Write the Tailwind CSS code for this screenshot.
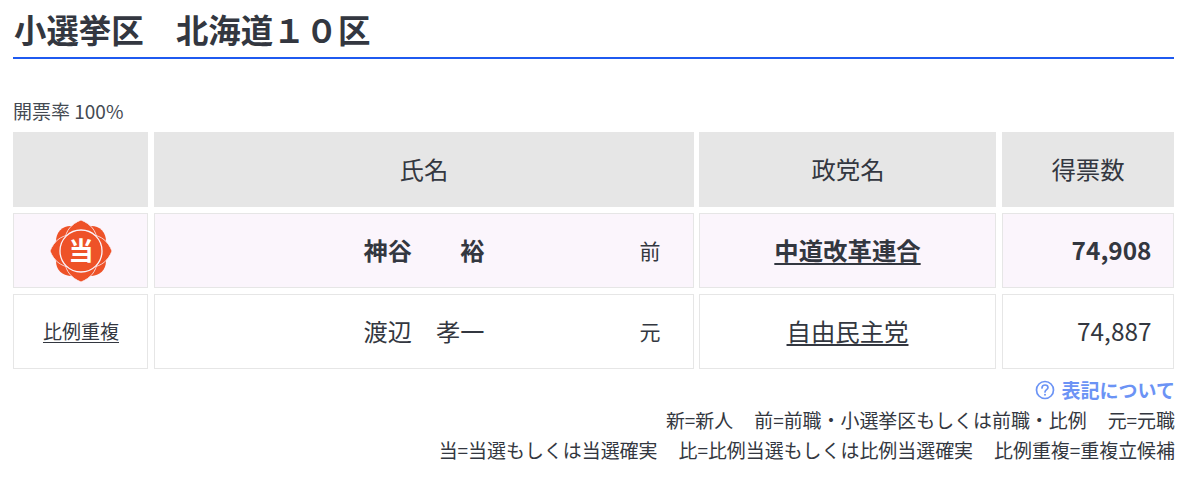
<!DOCTYPE html>
<html lang="ja">
<head>
<meta charset="utf-8">
<script src="https://cdn.jsdelivr.net/npm/@tailwindcss/browser@4"></script>
</head>
<body class="bg-white text-[#333740] font-['Noto_Sans_CJK_JP','Noto_Sans',sans-serif]">
<div class="w-[1182px] h-[478px] overflow-hidden pl-[13px] pr-[8px] pt-[9px]">
  <h2 class="h-[50px] border-b-2 border-[#1f5af0] text-[32.4px] leading-[40px] font-bold whitespace-pre pl-px">小選挙区　北海道１０区</h2>
  <p class="mt-[38px] h-[35px] text-[19px] leading-[28px] font-normal text-[#444a52]">開票率 100%</p>
  <div class="grid grid-cols-[135px_540px_297px_172px] gap-x-[5.5px] gap-y-[6px] w-[1161px]">
    <div class="h-[75px] bg-[#e6e6e6]"></div>
    <div class="h-[75px] bg-[#e6e6e6] flex items-center justify-center text-[24.4px] pl-px">氏名</div>
    <div class="h-[75px] bg-[#e6e6e6] flex items-center justify-center text-[24.4px] pl-px">政党名</div>
    <div class="h-[75px] bg-[#e6e6e6] flex items-center justify-center text-[24.4px] pl-px">得票数</div>

    <div class="h-[75px] bg-[#fbf5fc] border border-[#e6e6e6] flex items-center justify-center">
      <svg width="64" height="64" viewBox="-32 -32 64 64">
        <g fill="#ee5228">
          <path d="M-13 -14 C-15 -22 -9 -29 0 -29.5 C9 -29 15 -22 13 -14 L0 0Z" transform="rotate(45)"/>
          <path d="M-13 -14 C-15 -22 -9 -29 0 -29.5 C9 -29 15 -22 13 -14 L0 0Z" transform="rotate(135)"/>
          <path d="M-13 -14 C-15 -22 -9 -29 0 -29.5 C9 -29 15 -22 13 -14 L0 0Z" transform="rotate(225)"/>
          <path d="M-13 -14 C-15 -22 -9 -29 0 -29.5 C9 -29 15 -22 13 -14 L0 0Z" transform="rotate(315)"/>
        </g>
        <g fill="#ee5228" stroke="#fbf5fc" stroke-width="0.8">
          <path d="M0 -31 C10 -27 15 -20 16 -12 L0 0 L-16 -12 C-15 -20 -10 -27 0 -31Z"/>
          <path d="M0 -31 C10 -27 15 -20 16 -12 L0 0 L-16 -12 C-15 -20 -10 -27 0 -31Z" transform="rotate(90)"/>
          <path d="M0 -31 C10 -27 15 -20 16 -12 L0 0 L-16 -12 C-15 -20 -10 -27 0 -31Z" transform="rotate(180)"/>
          <path d="M0 -31 C10 -27 15 -20 16 -12 L0 0 L-16 -12 C-15 -20 -10 -27 0 -31Z" transform="rotate(270)"/>
        </g>
        <circle r="21" fill="#ee5228" stroke="#fbf5fc" stroke-width="1.3"/>
        <text x="0" y="9" text-anchor="middle" font-size="25" font-weight="700" fill="#fff">当</text>
      </svg>
    </div>
    <div class="h-[75px] bg-[#fbf5fc] border border-[#e6e6e6] flex items-center text-[24.2px] font-bold">
      <span class="ml-[209px] w-[122px] whitespace-pre">神谷　　裕</span>
      <span class="ml-[154px] text-[21px] font-normal">前</span>
    </div>
    <div class="h-[75px] bg-[#fbf5fc] border border-[#e6e6e6] flex items-center justify-center text-[24.4px] font-bold"><a href="#" class="underline underline-offset-[3px]">中道改革連合</a></div>
    <div class="h-[75px] bg-[#fbf5fc] border border-[#e6e6e6] flex items-center justify-end pr-[21px] text-[24.4px] font-bold">74,908</div>

    <div class="h-[75px] border border-[#e6e6e6] flex items-center justify-center text-[19px] pl-px"><a href="#" class="underline underline-offset-[3px]">比例重複</a></div>
    <div class="h-[75px] border border-[#e6e6e6] flex items-center text-[24.2px]">
      <span class="ml-[209px] w-[122px] whitespace-pre">渡辺　孝一</span>
      <span class="ml-[154px] text-[21px]">元</span>
    </div>
    <div class="h-[75px] border border-[#e6e6e6] flex items-center justify-center text-[24.4px]"><a href="#" class="underline underline-offset-[3px]">自由民主党</a></div>
    <div class="h-[75px] border border-[#e6e6e6] flex items-center justify-end pr-[21px] text-[24.4px]">74,887</div>
  </div>
  <div class="w-[1162px] mt-[9px] flex items-center justify-end gap-[7px] h-[24px] text-[19px] font-bold text-[#6b93f5]">
    <svg width="20" height="20" viewBox="0 0 20 20" fill="none" stroke="#6b93f5" stroke-width="1.7"><circle cx="10" cy="10" r="8.5"/><path d="M7 8 C7 5.8 8.5 5 10 5 C11.7 5 13 6 13 7.6 C13 9.6 10 9.8 10 12" stroke-linecap="round"/><circle cx="10" cy="14.7" r="1" fill="#6b93f5" stroke="none"/></svg>
    <span>表記について</span>
  </div>
  <p class="w-[1162px] mt-[3px] flex justify-end gap-[21px] text-[18.95px] leading-[30px] whitespace-pre"><span>新=新人</span><span>前=前職・小選挙区もしくは前職・比例</span><span>元=元職</span></p>
  <p class="w-[1162px] flex justify-end gap-[21px] text-[18.95px] leading-[30px] whitespace-pre"><span>当=当選もしくは当選確実</span><span>比=比例当選もしくは比例当選確実</span><span>比例重複=重複立候補</span></p>
</div>
</body>
</html>
